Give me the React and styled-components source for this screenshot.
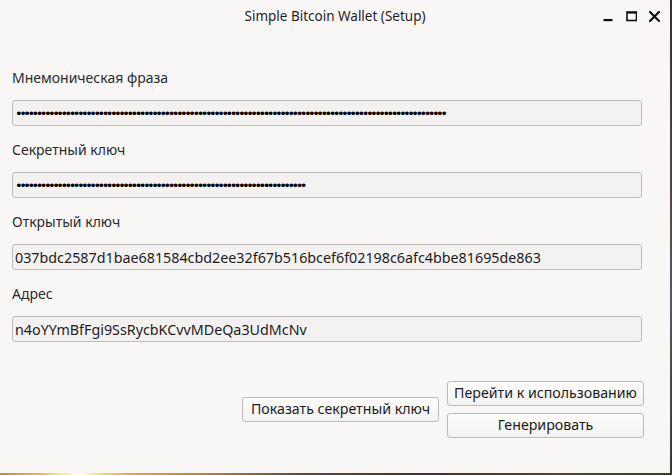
import React from "react";
import styled, { createGlobalStyle } from "styled-components";

const Global = createGlobalStyle`
  html, body { margin: 0; padding: 0; }
  body {
    width: 672px;
    height: 475px;
    overflow: hidden;
    background: linear-gradient(90deg, #d9830f 0px, #ffb51a 40px, #fff24a 60px, #ffffff 80px, #fff24a 95px, #f7a21a 130px, #d57e1e 200px, #6a4a2e 300px, #3e3235 420px, #4a4738 560px, #3a3a2c 672px);
    font-family: "Noto Sans", "Open Sans", sans-serif;
  }
  #root { width: 672px; height: 475px; }
`;

const Desktop = styled.div`
  width: 672px;
  height: 475px;
  display: flex;
  align-items: flex-start;
  background: linear-gradient(180deg, #3b2a2f 0px, #4a3a3d 120px, #5a5560 300px, #3a3430 473px, transparent 473px);
`;

const Window = styled.div`
  width: 670px;
  height: 473px;
  background: #f8f7f6;
  display: flex;
  flex-direction: column;
`;

const TitleBar = styled.div`
  height: 32px;
  display: grid;
  grid-template-columns: 1fr auto 1fr;
  align-items: center;
`;

const Title = styled.div`
  grid-column: 2;
  font-size: 13.5px;
  color: #1f1f1f;
  padding-bottom: 1px;
`;

const Controls = styled.div`
  grid-column: 3;
  justify-self: end;
  display: flex;
  align-items: center;
  gap: 12px;
  padding-right: 10px;
  padding-top: 1px;
`;

const Ctl = styled.svg`
  width: 11px;
  height: 11px;
  display: block;
`;

const Body = styled.div`
  flex: 1;
  display: flex;
  flex-direction: column;
  padding: 36px 28px 35px 12px;
`;

const Field = styled.div`
  display: flex;
  flex-direction: column;
  gap: 13px;
  margin-bottom: 14px;
`;

const Label = styled.div`
  font-size: 14px;
  line-height: 19px;
  color: #2b2b2b;
`;

const Input = styled.div`
  height: 24px;
  box-sizing: content-box;
  border: 1px solid #bdbcba;
  border-radius: 3px;
  background: #f3f2f1;
  display: flex;
  align-items: center;
  padding: 0 2px;
  font-size: 14.3px;
  color: #1c1c1c;
  white-space: nowrap;
  overflow: hidden;
`;

const Dots = styled.span`
  font-family: "DejaVu Sans", sans-serif;
  font-size: 13px;
  line-height: 18px;
  letter-spacing: -3.54px;
  color: #000;
  padding-top: 1px;
`;

const Spacer = styled.div`
  flex: 1;
`;

const Actions = styled.div`
  display: flex;
  justify-content: flex-end;
  align-items: center;
  gap: 8px;
  margin-right: -2px;
`;

const Stack = styled.div`
  display: flex;
  flex-direction: column;
  gap: 7px;
`;

const Button = styled.button`
  width: ${(p) => p.$w}px;
  height: 25px;
  border: 1px solid #bcbbb9;
  border-radius: 3px;
  background: linear-gradient(180deg, #fdfdfc 0%, #f3f2f1 100%);
  font-family: "Noto Sans", "Open Sans", sans-serif;
  font-size: 14.2px;
  color: #1c1c1c;
  padding: 0;
  line-height: 1;
`;

const fields = [
  { label: "Мнемоническая фраза", dots: 104 },
  { label: "Секретный ключ", dots: 70 },
  { label: "Открытый ключ", value: "037bdc2587d1bae681584cbd2ee32f67b516bcef6f02198c6afc4bbe81695de863" },
  { label: "Адрес", value: "n4oYYmBfFgi9SsRycbKCvvMDeQa3UdMcNv" },
];

export default function App() {
  return (
    <>
      <Global />
      <Desktop>
        <Window>
          <TitleBar>
            <Title>Simple Bitcoin Wallet (Setup)</Title>
            <Controls>
              <Ctl viewBox="0 0 11 11">
                <rect x="0.5" y="8" width="9" height="2.2" fill="#111" />
              </Ctl>
              <Ctl viewBox="0 0 11 11">
                <rect x="1" y="1" width="9.5" height="8.5" fill="none" stroke="#111" strokeWidth="1.6" />
                <rect x="1" y="1" width="9.5" height="1.6" fill="#111" />
              </Ctl>
              <Ctl viewBox="0 0 11 11">
                <path d="M1 1 L10 10 M10 1 L1 10" stroke="#111" strokeWidth="2.2" strokeLinecap="square" />
              </Ctl>
            </Controls>
          </TitleBar>
          <Body>
            {fields.map((f) => (
              <Field key={f.label}>
                <Label>{f.label}</Label>
                <Input>
                  {f.dots ? <Dots>{"•".repeat(f.dots)}</Dots> : f.value}
                </Input>
              </Field>
            ))}
            <Spacer />
            <Actions>
              <Button $w={197}>Показать секретный ключ</Button>
              <Stack>
                <Button $w={197}>Перейти к использованию</Button>
                <Button $w={197}>Генерировать</Button>
              </Stack>
            </Actions>
          </Body>
        </Window>
      </Desktop>
    </>
  );
}
